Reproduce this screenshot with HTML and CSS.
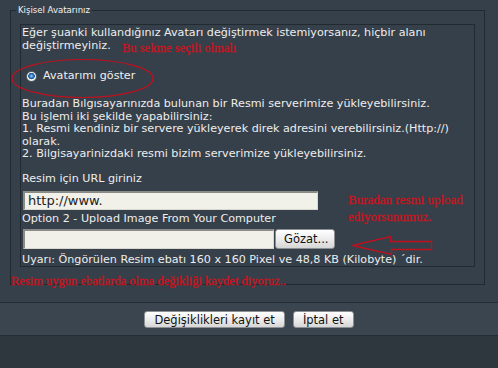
FILE: index.html
```html
<!DOCTYPE html>
<html lang="tr">
<head>
    <meta charset="UTF-8">
    <title>Kişisel Avatarınız</title>
    <link rel="stylesheet" href="styles.css">
</head>
<body>

    <div class="page">

        <!-- Avatar Settings -->
        <fieldset class="avatar-set">
            <legend>Kişisel Avatarınız</legend>
            <div class="avatar-box">
                <p class="intro">Eğer şuanki kullandığınız Avatarı değiştirmek istemiyorsanız, hiçbir alanı<br>değiştirmeyiniz.</p>

                <label class="avatar-option">
                    <span class="radio"></span>
                    <span>Avatarımı göster</span>
                </label>

                <p class="help">
                    Buradan Bılgısayarınızda bulunan bir Resmi serverimize yükleyebilirsiniz.<br>
                    Bu işlemi iki şekilde yapabilirsiniz:<br>
                    1. Resmi kendiniz bir servere yükleyerek direk adresini verebilirsiniz.(Http://)<br>
                    olarak.<br>
                    2. Bilgisayarinizdaki resmi bizim serverimize yükleyebilirsiniz.
                </p>

                <p class="field-label">Resim için URL giriniz</p>
                <input class="url-input" type="text" value="http://www.">

                <p class="field-label upload-label">Option 2 - Upload Image From Your Computer</p>
                <div class="upload-row">
                    <input class="file-input" type="text">
                    <button class="browse-btn">Gözat...</button>
                </div>

                <p class="warning">Uyarı: Öngörülen Resim ebatı 160 x 160 Pixel ve 48,8 KB (Kilobyte) ´dir.</p>
            </div>
        </fieldset>

        <!-- Form Buttons -->
        <div class="actions">
            <button class="btn">Değişiklikleri kayıt et</button>
            <button class="btn">İptal et</button>
        </div>
        <div class="footer"></div>

        <!-- Red annotations drawn over the form -->
        <svg class="marks" width="498" height="368" viewBox="0 0 498 368">
            <ellipse cx="82.5" cy="78.5" rx="70.5" ry="19" fill="none" stroke="#c0101e" stroke-width="1.2"/>
            <polygon points="352.5,245.5 390.5,236.5 390.5,241.5 431.5,241.5 431.5,249.5 391.5,249.5 391.5,254.5" fill="none" stroke="#c0101e" stroke-width="1.3"/>
        </svg>
        <span class="note note-tab">Bu sekme seçili olmalı</span>
        <span class="note note-upload">Buradan resmi upload<br>ediyorsunumuz.</span>
        <span class="note note-size">Resim uygun ebatlarda olma değikliği kaydet diyoruz..</span>

    </div>

</body>
</html>
```

FILE: styles.css
```css
/* Base Styles */
body {
    margin: 0;
    background-color: #36404a;
    font-family: "DejaVu Sans", Verdana, sans-serif;
    color: #eeeeee;
}

.page {
    position: relative;
    width: 498px;
    height: 368px;
    overflow: hidden;
}

p {
    margin: 0;
}

/* Fieldset */
.avatar-set {
    margin: 5px 0 0 10px;
    width: 475px;
    height: 280px;
    box-sizing: border-box;
    border: 1px solid #222a31;
    padding: 0 9px 0 9px;
}

.avatar-set legend {
    font-family: "DejaVu Sans Condensed", "DejaVu Sans", sans-serif;
    font-size: 9.5px;
    line-height: 10px;
    padding: 0 2px;
    margin-left: -4px;
    color: #f2f2f2;
}

.avatar-box {
    border: 1px solid #222a31;
    margin-top: 9px;
    padding: 2px 1px 0 1px;
    height: 243px;
    box-sizing: border-box;
    font-size: 11.15px;
    line-height: 12.5px;
    white-space: nowrap;
}

/* Radio row */
.avatar-option {
    display: flex;
    align-items: center;
    gap: 6px;
    margin: 17px 0 0 4px;
    height: 14px;
}

.radio {
    width: 9px;
    height: 9px;
    border: 1px solid #5e6266;
    border-radius: 50%;
    background: radial-gradient(circle at 50% 45%, #a8d8f5 0, #3d8ad0 1.5px, #1d5291 3px, #ffffff 3.6px, #dcdcdc 5px);
}

.help {
    margin-top: 15px;
}

.field-label {
    margin-top: 12.5px;
}

.upload-label {
    margin-top: 3px;
}

/* Inputs */
.url-input,
.file-input {
    display: block;
    box-sizing: border-box;
    height: 19px;
    margin: 5px 0 0 1px;
    padding: 0 3px;
    background-color: #f1f1ea;
    border: 1px solid #d8d8d0;
    border-top: 2px solid #8a8a86;
    border-left: 2px solid #8a8a86;
    font-family: "DejaVu Sans", sans-serif;
    font-size: 13px;
    color: #222222;
}

.url-input {
    width: 295px;
}

.upload-row {
    display: flex;
    align-items: stretch;
    gap: 1px;
    margin-top: 4px;
}

.file-input {
    width: 251px;
    height: 20px;
    margin: 0 0 0 1px;
}

/* Buttons */
.browse-btn,
.btn {
    font-family: "DejaVu Sans", sans-serif;
    font-size: 11px;
    color: #111111;
    background: linear-gradient(#ffffff, #ececec 50%, #d6d6d6);
    border: 1px solid #8c9094;
    border-radius: 3px;
    padding: 0 8px;
    cursor: pointer;
}

.browse-btn {
    width: 60px;
    height: 20px;
    font-size: 11.5px;
}

.warning {
    margin-top: 5px;
}

/* Button bar */
.actions {
    display: flex;
    justify-content: center;
    gap: 8px;
    margin-top: 17px;
    height: 34px;
    padding: 8px 0 0 0;
    box-sizing: border-box;
    border-top: 1px solid #252c33;
    border-bottom: 1px solid #252c33;
    background-color: #3a4550;
}

.btn {
    height: 17px;
    padding: 0 9px;
    font-size: 11.5px;
}

.footer {
    height: 40px;
    background-color: #2e363e;
}

/* Annotations */
.marks {
    position: absolute;
    top: 0;
    left: 0;
    pointer-events: none;
}

.note {
    position: absolute;
    font-family: "Liberation Serif", "Times New Roman", serif;
    color: #c8141e;
    -webkit-text-stroke: 0.3px #c8141e;
    white-space: nowrap;
}

.note-tab {
    left: 122px;
    top: 41px;
    font-size: 12.5px;
}

.note-upload {
    left: 348px;
    top: 191px;
    font-size: 13px;
    line-height: 17px;
}

.note-size {
    left: 11px;
    top: 274px;
    font-size: 12.5px;
}
```
